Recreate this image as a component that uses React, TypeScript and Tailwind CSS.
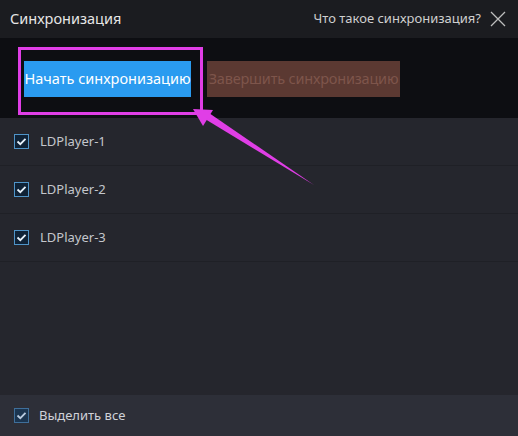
import React from "react";

function Check({ dim }: { dim?: boolean }) {
  return (
    <div className={`flex h-[15px] w-[15px] items-center justify-center border ${dim ? "border-[#3f6f9a] bg-[#1b3550]" : "border-[#4f94c8] bg-[#0f2236]"}`}>
      <svg width="11" height="9" viewBox="0 0 11 9" fill="none">
        <path d="M1.5 4.5 L4.3 7.2 L9.5 1.8" stroke={dim ? "#b9cbe0" : "#e8f2fb"} strokeWidth="1.8" />
      </svg>
    </div>
  );
}

export default function App() {
  const rows = ["LDPlayer-1", "LDPlayer-2", "LDPlayer-3"];
  return (
    <div className="relative flex h-[436px] w-[518px] flex-col overflow-hidden bg-[#25262d] font-['Noto_Sans',sans-serif]">
      <div className="flex h-[38px] items-center justify-between bg-[#1b1c20] pl-[10px] pr-[12px]">
        <span className="text-[14.5px] text-[#e6e6e6]">Синхронизация</span>
        <div className="flex items-center gap-[9px]">
          <span className="text-[13px] text-[#cfcfcf]">Что такое синхронизация?</span>
          <svg width="16" height="16" viewBox="0 0 16 16" fill="none">
            <path d="M1 1 L15 15 M15 1 L1 15" stroke="#bdbdbd" strokeWidth="1.3" />
          </svg>
        </div>
      </div>
      <div className="flex h-[80px] items-start bg-[#0d0e12] pl-[18px] pt-[9px]">
        <div className="border-[3px] border-[#e03ee6] pb-[15px] pl-[3px] pr-[9px] pt-[11px]">
          <div className="flex h-[36px] w-[167px] items-center justify-center whitespace-nowrap bg-[#2a9bf0] text-[14.5px] text-white">
            Начать синхронизацию
          </div>
        </div>
        <div className="ml-[4px] mt-[14px] flex h-[36px] w-[193px] items-center justify-center whitespace-nowrap bg-[#5b3932] text-[14.5px] tracking-[-0.2px] text-[#7e554b]">
          Завершить синхронизацию
        </div>
      </div>
      <div className="flex flex-col">
        {rows.map((r) => (
          <div key={r} className="flex h-[48px] items-center gap-[11px] border-b border-[#1f2026] pl-[14px]">
            <Check />
            <span className="text-[13px] text-[#c4c6cc]">{r}</span>
          </div>
        ))}
      </div>
      <div className="flex-1" />
      <div className="flex h-[41px] items-center gap-[10px] bg-[#2d2f38] pl-[14px]">
        <Check dim />
        <span className="text-[13px] text-[#d0d2d8]">Выделить все</span>
      </div>
      <svg className="absolute left-0 top-0" width="518" height="436" viewBox="0 0 518 436">
        <path d="M314 185 L205 119 L209 113 Z" fill="#e03ee6" />
        <path d="M193 109 L213 110 L203 126 Z" fill="#e03ee6" />
      </svg>
    </div>
  );
}
